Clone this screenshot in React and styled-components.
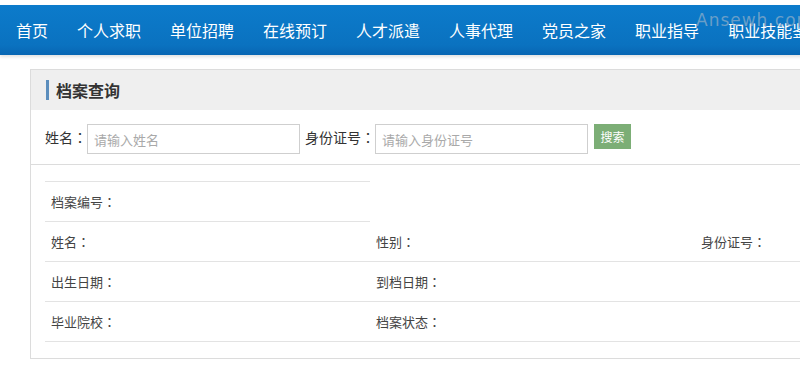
import React from "react";
import styled, { createGlobalStyle } from "styled-components";

const GlobalStyle = createGlobalStyle`
    html, body {
        margin: 0;
        padding: 0;
        overflow: hidden;
        background: #fff;
        font-family: "Noto Sans CJK SC", "Liberation Sans", sans-serif;
    }
`;

const menu = ['首页','个人求职','单位招聘','在线预订','人才派遣','人事代理','党员之家','职业指导','职业技能鉴定'];

const rows = [
    [{label:'档案编号', top:true}],
    [{label:'姓名'},{label:'性别'},{label:'身份证号'}],
    [{label:'出生日期'},{label:'到档日期'},{label:''}],
    [{label:'毕业院校'},{label:'档案状态'},{label:''}],
];

const App = () => {
    return (
        <Page>
            <GlobalStyle/>
            <Nav>
                {menu.map((m,i)=>(
                    <NavItem key={'nav'+i}>{m}</NavItem>
                ))}
                <Watermark>Ansewh.com</Watermark>
            </Nav>
            <Panel>
                <PanelHead>
                    <Title>档案查询</Title>
                </PanelHead>
                <SearchBar>
                    <Label>姓名<Colon>：</Colon></Label>
                    <Input placeholder="请输入姓名"/>
                    <Label>身份证号<Colon>：</Colon></Label>
                    <Input placeholder="请输入身份证号"/>
                    <SearchBtn>搜索</SearchBtn>
                </SearchBar>
                <Body>
                    <Table>
                        <tbody>
                            {rows.map((r,i)=>(
                                <tr key={'r'+i}>
                                    {r.map((c,j)=>(
                                        <Cell key={'c'+j} $top={c.top}>
                                            {c.label ? <>{c.label}<Colon>：</Colon></> : null}
                                        </Cell>
                                    ))}
                                </tr>
                            ))}
                        </tbody>
                    </Table>
                </Body>
            </Panel>
        </Page>
    );
};

export default App;

const Page = styled.div`
    width: 800px;
    padding-top: 5px;
`;

const Nav = styled.div`
    position: relative;
    display: flex;
    align-items: center;
    height: 50px;
    width: 1000px;
    padding-left: 16px;
    gap: 29px;
    background: linear-gradient(#0c7bcb, #0a72c0 80%, #0866b3);
    box-shadow: 0 2px 3px rgba(0,0,0,.12);
    white-space: nowrap;
`;

const NavItem = styled.div`
    color: #fff;
    font-size: 16px;
    line-height: 50px;
`;

const Watermark = styled.div`
    position: absolute;
    left: 696px;
    top: 5px;
    font-family: "DejaVu Sans", sans-serif;
    font-size: 17px;
    letter-spacing: 1px;
    color: rgba(170,185,200,.6);
`;

const Panel = styled.div`
    margin: 14px 0 0 30px;
    width: 1000px;
    border: 1px solid #dcdcdc;
    border-right: none;
`;

const PanelHead = styled.div`
    display: flex;
    align-items: center;
    height: 40px;
    background: #efefef;
    padding-left: 15px;
`;

const Title = styled.h3`
    margin: 0;
    padding-left: 7px;
    border-left: 3px solid #5c8ebd;
    font-size: 16px;
    font-weight: bold;
    color: #333;
    line-height: 20px;
`;

const SearchBar = styled.div`
    display: flex;
    align-items: flex-start;
    height: 55px;
    padding: 14px 0 0 14px;
    box-sizing: border-box;
    border-bottom: 1px solid #dcdcdc;
`;

const Colon = styled.span`
    font-family: "Noto Sans CJK JP", "Noto Sans CJK TC", sans-serif;
`;

const Label = styled.span`
    font-size: 14px;
    color: #333;
    line-height: 26px;
    input + & { margin-left: 5px; }
`;

const Input = styled.input`
    width: 213px;
    height: 30px;
    box-sizing: border-box;
    border: 1px solid #cfcfcf;
    padding: 0 6px;
    font-size: 13px;
    font-family: inherit;
    outline: none;
    &::placeholder { color: #a9a9a9; }
`;

const SearchBtn = styled.button`
    margin-left: 6px;
    width: 37px;
    height: 25px;
    border: none;
    padding: 0;
    background: #7cae76;
    color: #fff;
    font-size: 12px;
    font-family: inherit;
`;

const Body = styled.div`
    padding: 16px 14px 16px 14px;
`;

const Table = styled.table`
    border-collapse: collapse;
    table-layout: fixed;
    width: 975px;
    td { width: 325px; }
`;

const Cell = styled.td`
    height: 40px;
    padding: 0 0 0 6px;
    box-sizing: border-box;
    font-size: 13px;
    color: #444;
    border-bottom: 1px solid #e3e3e3;
    border-top: ${p => p.$top ? '1px solid #e3e3e3' : 'none'};
`;
